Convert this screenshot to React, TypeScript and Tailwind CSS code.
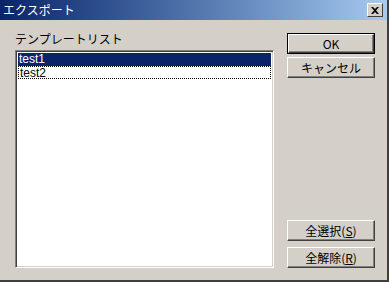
import { useState } from 'react';

const items = ['test1', 'test2'];

function Btn({ label, isDefault = false }: { label: React.ReactNode; isDefault?: boolean }) {
  return (
    <button
      className={
        'w-[88px] h-[21px] bg-[#d4d0c8] text-[12px] text-black flex items-center justify-center ' +
        (isDefault ? 'border border-black' : '')
      }
      style={{ fontFamily: "'Noto Sans CJK JP', 'Liberation Sans', sans-serif" }}
    >
      <span className="w-full h-full flex items-center justify-center border-t border-l border-t-white border-l-white border-r border-b border-r-[#404040] border-b-[#404040] shadow-[inset_-1px_-1px_0_#808080]">
        {label}
      </span>
    </button>
  );
}

export default function App() {
  const [selected, setSelected] = useState(0);

  return (
    <div className="w-[389px] h-[282px] bg-[#d4d0c8] flex flex-col border-r-2 border-b-2 border-r-[#404040] border-b-[#404040] overflow-hidden">
      {/* Title bar */}
      <div className="h-[20px] flex items-center justify-between pl-[3px] pr-[4px] bg-gradient-to-r from-[#0a246a] to-[#a6caf0]">
        <span
          className="text-white text-[12px] leading-none"
          style={{ fontFamily: "'Noto Sans CJK JP', sans-serif" }}
        >
          エクスポート
        </span>
        <div className="w-[16px] h-[14px] bg-[#d4d0c8] flex items-center justify-center border-t border-l border-white border-r border-b border-r-[#404040] border-b-[#404040]">
          <svg width="8" height="7" viewBox="0 0 8 7">
            <path d="M0 0h2l2 2 2-2h2L5 3.5 8 7H6L4 5 2 7H0l3-3.5z" fill="black" />
          </svg>
        </div>
      </div>

      <div className="flex flex-1 pl-[15px] pt-[12px] pb-[12px]">
        {/* Left column */}
        <div className="flex flex-col w-[259px]">
          <div
            className="text-[12px] leading-[14px] text-black h-[18px]"
            style={{ fontFamily: "'Noto Sans CJK JP', sans-serif" }}
          >
            テンプレートリスト
          </div>
          <div className="flex-1 bg-white border-t border-l border-t-[#808080] border-l-[#808080] border-r border-b border-r-white border-b-white shadow-[inset_1px_1px_0_#404040,inset_-1px_-1px_0_#d4d0c8] p-[2px]">
            {items.map((it, i) => (
              <div
                key={it}
                onClick={() => setSelected(i)}
                className={
                  'h-[13px] text-[12px] leading-[13px] pl-[1px] ' +
                  (i === selected
                    ? 'bg-[#0a246a] text-white'
                    : 'text-black border border-dotted border-black leading-[11px]')
                }
                style={{ fontFamily: "'Liberation Sans', sans-serif" }}
              >
                {it}
              </div>
            ))}
          </div>
        </div>

        {/* Right column */}
        <div className="flex flex-col ml-[13px] pt-[1px]">
          <Btn label="OK" isDefault />
          <div className="h-[3px]" />
          <Btn label="キャンセル" />
          <div className="flex-1" />
          <Btn label={<>全選択(<span className="underline">S</span>)</>} />
          <div className="h-[6px]" />
          <Btn label={<>全解除(<span className="underline">R</span>)</>} />
        </div>
      </div>
    </div>
  );
}
